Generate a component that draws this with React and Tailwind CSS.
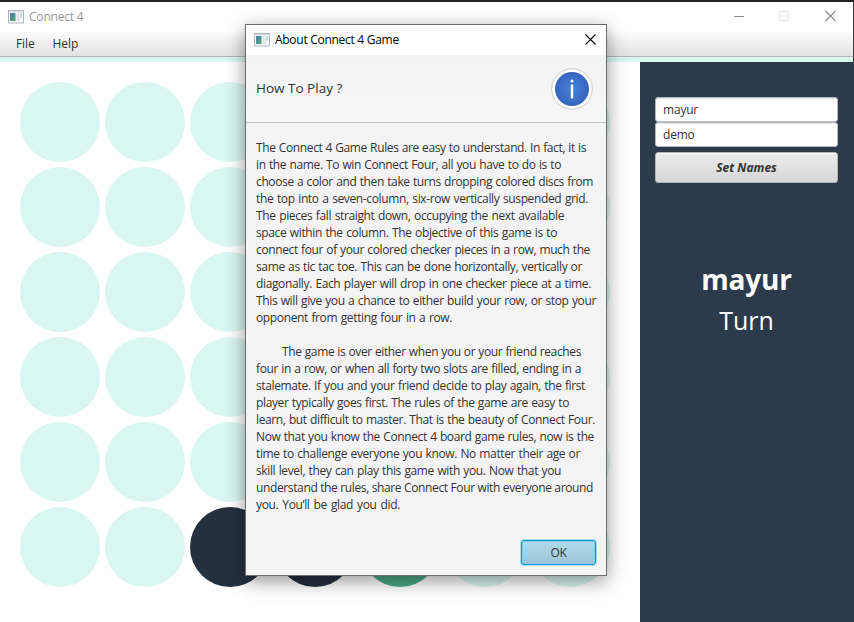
const RULES = [
  ["The Connect 4 Game Rules are easy to understand. In fact, it is", "w-[330px]"],
  ["in the name. To win Connect Four, all you have to do is to", "w-[305px]"],
  ["choose a color and then take turns dropping colored discs from", "w-[337px]"],
  ["the top into a seven-column, six-row vertically suspended grid.", "w-[332px]"],
  ["The pieces fall straight down, occupying the next available", "w-[308px]"],
  ["space within the column. The objective of this game is to", "w-[301px]"],
  ["connect four of your colored checker pieces in a row, much the", "w-[334px]"],
  ["same as tic tac toe. This can be done horizontally, vertically or", "w-[326px]"],
  ["diagonally. Each player will drop in one checker piece at a time.", "w-[335px]"],
  ["This will give you a chance to either build your row, or stop your", "w-[340px]"],
  ["opponent from getting four in a row.", "w-[196px]"],
];

const ENDING = [
  ["The game is over either when you or your friend reaches", "ml-[26px] w-[299px]"],
  ["four in a row, or when all forty two slots are filled, ending in a", "w-[325px]"],
  ["stalemate. If you and your friend decide to play again, the first", "w-[329px]"],
  ["player typically goes first. The rules of the game are easy to", "w-[313px]"],
  ["learn, but difficult to master. That is the beauty of Connect Four.", "w-[339px]"],
  ["Now that you know the Connect 4 board game rules, now is the", "w-[338px]"],
  ["time to challenge everyone you know. No matter their age or", "w-[324px]"],
  ["skill level, they can play this game with you. Now that you", "w-[305px]"],
  ["understand the rules, share Connect Four with everyone around", "w-[337px]"],
  ["you. You’ll be glad you did.", "w-[144px]"],
];

function Lines({ lines }) {
  return (
    <div>
      {lines.map(([text, width]) => (
        <p key={text} className={`h-[17px] whitespace-nowrap [text-align-last:justify] ${width}`}>
          {text}
        </p>
      ))}
    </div>
  );
}

function AppIcon() {
  return (
    <svg width="16" height="14" viewBox="0 0 16 14" className="shrink-0">
      <defs>
        <linearGradient id="pane" x1="0" y1="0" x2="0.6" y2="1">
          <stop offset="0" stopColor="#4a7fb0" />
          <stop offset="1" stopColor="#4fa576" />
        </linearGradient>
      </defs>
      <rect x="0.5" y="0.5" width="15" height="12.5" fill="#f4f5f6" stroke="#b3b7be" />
      <path d="M1 1.5h14" stroke="#d5d8dd" />
      <rect x="2" y="3" width="5.5" height="8" fill="url(#pane)" />
      <rect x="8.5" y="3" width="3" height="8" fill="#e5e5e8" />
      <rect x="12" y="3" width="2" height="4.5" fill="#bfe0d8" />
    </svg>
  );
}

function discColor(row, col) {
  if (row === 5 && (col === 2 || col === 3)) return "bg-[#25303f]";
  if (row === 5 && col === 4) return "bg-[#4caa88]";
  return "bg-[#daf6f0]";
}

function Board() {
  return (
    <div className="grid w-[640px] grid-cols-[repeat(7,80px)] content-start gap-[5px] bg-white pl-5 pt-5">
      {Array.from({ length: 42 }, (_, i) => (
        <div key={i} className={`size-20 rounded-full ${discColor(Math.floor(i / 7), i % 7)}`} />
      ))}
    </div>
  );
}

function Field({ children }) {
  return (
    <div className="flex h-[25px] items-center rounded-[3px] border border-[#b5babf] bg-white px-[7px] tracking-[-0.2px] shadow-[inset_0_2px_1px_-1px_#e2e2e2]">
      {children}
    </div>
  );
}

function Sidebar() {
  return (
    <div className="flex flex-1 flex-col bg-[#2c3a4b] pl-[15px] pr-4 pt-[35px]">
      <Field>mayur</Field>
      <Field>demo</Field>
      <button className="mt-[5px] h-[31px] rounded-[3px] border border-[#b4b6b8] bg-linear-to-b from-[#ececec] to-[#d6d6d6] text-[12px] font-bold italic shadow-[inset_0_1px_0_#fafafa]">
        Set Names
      </button>
      <div className="mt-[75px] text-center text-[28px] font-bold leading-[42px] tracking-[-0.2px] text-white">
        mayur
      </div>
      <div className="text-center text-[25px] leading-[41px] text-white">Turn</div>
    </div>
  );
}

function AboutDialog() {
  return (
    <div className="absolute left-[245px] top-[24px] flex h-[552px] w-[362px] flex-col border border-[#6b6e6e] bg-[#f4f4f4] shadow-[0_5px_18px_rgba(0,0,0,0.42)]">
      <div className="flex h-[30px] items-center bg-white pl-2 pr-[10px] text-black">
        <AppIcon />
        <span className="ml-[5px] tracking-[-0.28px]">About Connect 4 Game</span>
        <svg width="11" height="11" viewBox="0 0 11 11" className="mb-[2px] ml-auto" stroke="#000" strokeWidth="1.1">
          <path d="M.5 .5l10 10M10.5 .5l-10 10" />
        </svg>
      </div>
      <div className="flex h-[68px] items-center justify-between border-b border-[#c1c1c1] bg-linear-to-b from-[#f2f2f2] to-[#f8f8f8] pl-[10px] pr-[13px]">
        <span className="text-[13.5px]">How To Play ?</span>
        <svg width="42" height="42" viewBox="0 0 42 42">
          <defs>
            <radialGradient id="info">
              <stop offset="0" stopColor="#4484da" />
              <stop offset="1" stopColor="#3664bf" />
            </radialGradient>
          </defs>
          <circle cx="21" cy="21" r="20.3" fill="#fff" stroke="#ccc" />
          <circle cx="21" cy="21" r="17" fill="url(#info)" />
          <rect x="19.8" y="16.5" width="2.4" height="14" fill="#fff" />
          <circle cx="21" cy="13" r="1.5" fill="#fff" />
        </svg>
      </div>
      <div className="flex flex-1 flex-col gap-[17px] pl-[10px] pt-[16px] leading-[17px] tracking-[-0.37px]">
        <Lines lines={RULES} />
        <Lines lines={ENDING} />
      </div>
      <div className="flex justify-end pb-[10px] pr-[10px]">
        <button className="h-[25px] w-[75px] rounded-[3px] border border-[#0796d1] bg-linear-to-b from-[#b2dbee] to-[#9bc4d7] tracking-[-0.3px] shadow-[0_0_0_1px_#a4dcf2,inset_0_0_0_1px_#8fc8e1]">
          OK
        </button>
      </div>
    </div>
  );
}

export default function App() {
  return (
    <div className="relative flex h-[622px] w-[854px] flex-col overflow-hidden bg-white font-['Open_Sans','Noto_Sans',sans-serif] text-[12px] text-[#333]">
      <div className="h-[2px] bg-[#242223]" />
      <div className="flex h-[60px] flex-col border-r border-[#3c3c3e]">
        <div className="flex h-[30px] shrink-0 items-center pl-2 text-[#999]">
          <AppIcon />
          <span className="ml-[5px] tracking-[-0.2px]">Connect 4</span>
          <svg width="102" height="12" viewBox="0 0 102 12" className="mb-[2px] ml-auto mr-[17px]" fill="none">
            <path d="M0 6.5h10" stroke="#8a8a8a" />
            <rect x="45.5" y="1.5" width="9" height="9" stroke="#e7e7e7" />
            <path d="M91.5 1l10 10M101.5 1l-10 10" stroke="#8a8a8a" strokeWidth="1.1" />
          </svg>
        </div>
        <div className="flex h-[25px] shrink-0 items-center gap-[18px] border-b border-[#b5b5b5] bg-linear-to-b from-[#fdfdfd] to-[#e2e2e2] pl-4 tracking-[-0.1px]">
          <span>File</span>
          <span>Help</span>
        </div>
        <div className="h-[5px] bg-[#daf6f0]" />
      </div>
      <div className="flex flex-1">
        <Board />
        <Sidebar />
      </div>
      <AboutDialog />
    </div>
  );
}
